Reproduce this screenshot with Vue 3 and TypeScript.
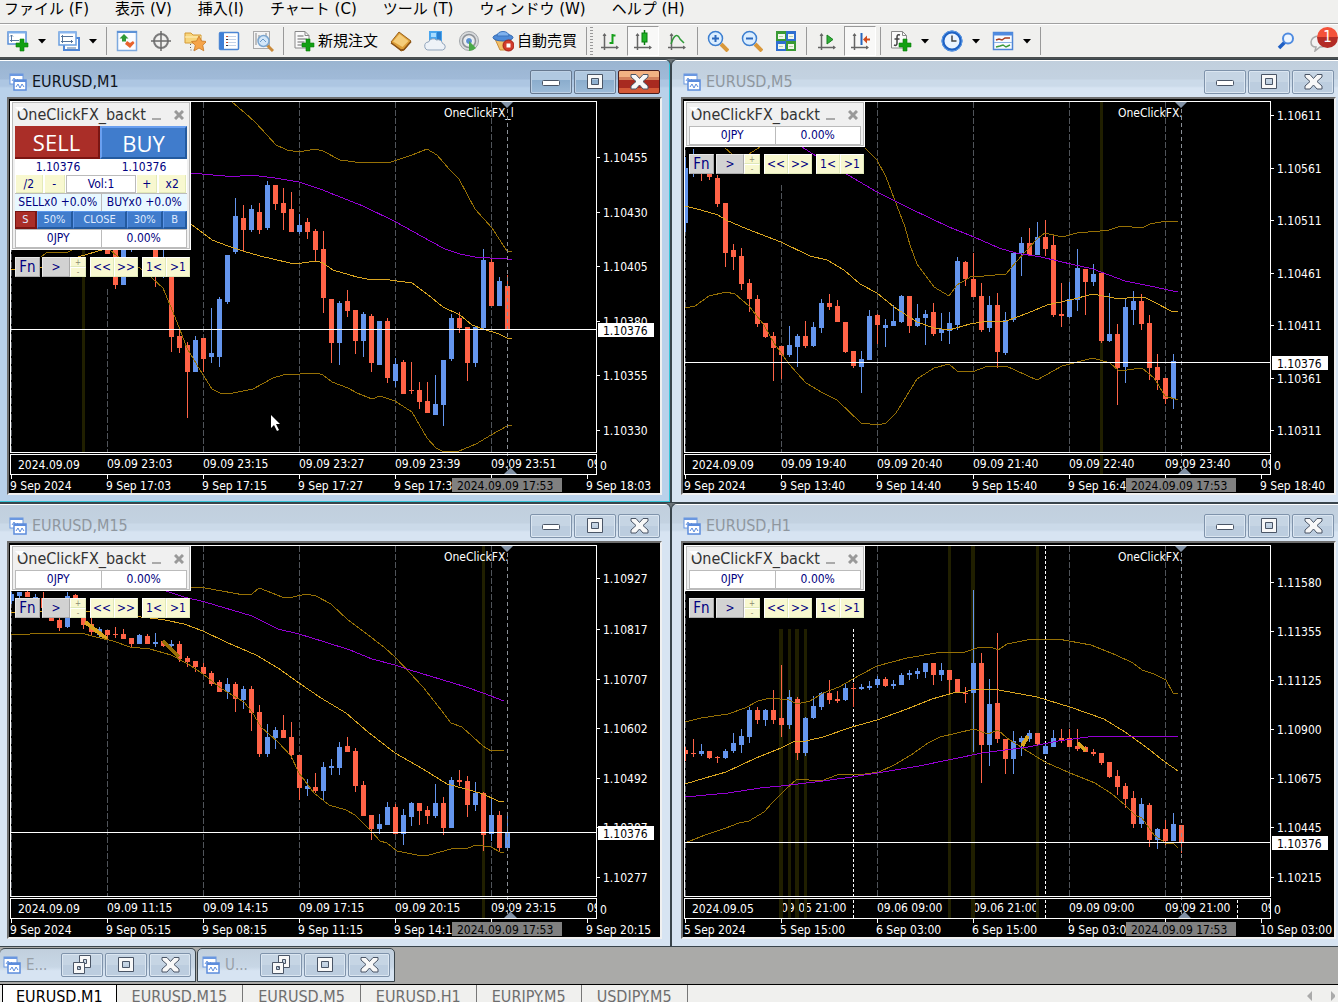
<script setup lang="ts">
type Bar = [high: number, open: number, close: number, low: number, up: 0 | 1]

interface Chart {
  title: string
  active: boolean
  full: boolean
  label: string
  firstBar: number
  gridTop: number
  bars: Bar[]
  bands: string[]
  mid: string
  slow: string
  marks: { d: string; color: string }[]
  stripes: { x: number; w: number; y: number; sub: boolean }[]
  days: { x: number; y: number }[]
  price: number
  scale: { y: number; text: string }[]
  subDate: string
  subTimes: string[]
  times: string[]
}

const BLUE = '#6495ed'
const RED = '#ff6347'
const columns = [11, 107, 203, 299, 395, 491]

const levels = (ys: number[], texts: string[]) => ys.map((y, i) => ({ y, text: texts[i] }))

const charts: Chart[] = [
  {
    title: 'EURUSD,M1',
    active: true,
    full: true,
    label: 'OneClickFX_l',
    firstBar: 12,
    gridTop: 289,
    bars: [
      [248, 248, 254, 254, 0], [240, 240, 285, 289, 0], [240, 240, 285, 285, 1], [240, 240, 245, 252, 1],
      [240, 240, 241, 241, 0], [240, 240, 241, 241, 0], [240, 240, 275, 287, 0], [248, 262, 274, 278, 1],
      [262, 265, 337, 352, 0], [329, 336, 348, 353, 0], [342, 345, 372, 418, 0], [336, 340, 372, 372, 1],
      [338, 338, 359, 372, 0], [308, 353, 357, 363, 1], [297, 299, 357, 367, 1], [255, 255, 302, 304, 1],
      [198, 216, 252, 254, 1], [205, 218, 230, 251, 0], [205, 209, 230, 232, 1], [203, 212, 230, 234, 0],
      [181, 185, 228, 230, 1], [185, 185, 204, 210, 0], [188, 203, 213, 230, 0], [192, 209, 232, 232, 0],
      [214, 225, 232, 234, 1], [218, 222, 232, 239, 0], [229, 231, 250, 261, 0], [231, 249, 298, 313, 0],
      [299, 299, 343, 363, 0], [301, 303, 343, 365, 1], [290, 301, 311, 317, 0], [310, 310, 341, 354, 0],
      [312, 314, 341, 357, 1], [314, 316, 363, 372, 0], [321, 321, 365, 365, 1], [318, 321, 378, 383, 0],
      [358, 364, 381, 387, 1], [360, 362, 394, 394, 0], [362, 390, 391, 394, 0], [382, 390, 402, 409, 0],
      [382, 401, 413, 413, 0], [375, 404, 415, 415, 1], [360, 360, 405, 426, 1], [314, 318, 359, 361, 1],
      [312, 318, 328, 333, 0], [327, 327, 363, 381, 0], [327, 327, 363, 367, 1], [249, 260, 328, 329, 1],
      [258, 262, 306, 306, 0], [277, 281, 306, 306, 1], [275, 286, 329, 329, 0],
    ],
    bands: [
      '232,102 245,113 255,122 267,135 276,145 287,150 299,152 315,149 323,151 340,160 355,162 363,163 372,162 388,163 397,160 412,155 427,149 437,155 450,170 459,179 475,209 492,228 507,251 512,251',
      '41,257 46,253 60,252 66,253 72,250',
      '110,250 117,256 140,268 152,278 163,288 175,317 187,348 200,370 212,389 220,393 228,394 243,391 253,389 273,378 283,375 317,373 323,375 332,382 348,388 357,393 372,399 380,396 395,401 412,412 427,438 436,448 442,451 459,451 476,444 491,435 507,426 512,425',
    ],
    mid: '11,269 14,270 40,268 191,224 212,240 228,246 243,251 260,256 290,263 302,263 317,261 323,263 333,270 357,277 372,280 383,279 397,281 412,283 427,294 443,307 460,315 472,325 483,329 499,334 507,338 512,338',
    slow: '190,173 225,176 240,176 251,175 275,178 299,182 323,190 330,193 363,206 396,222 430,241 445,249 460,254 475,257 490,258 502,258 512,260',
    marks: [],
    stripes: [{ x: 82, w: 3, y: 249, sub: false }],
    days: [],
    price: 329,
    scale: levels([157, 212, 266, 321, 375, 430], ['1.10455', '1.10430', '1.10405', '1.10380', '1.10355', '1.10330']),
    subDate: '2024.09.09',
    subTimes: ['09.09 23:03', '09.09 23:15', '09.09 23:27', '09.09 23:39', '09.09 23:51'],
    times: ['9 Sep 2024', '9 Sep 17:03', '9 Sep 17:15', '9 Sep 17:27', '9 Sep 17:39', '', '9 Sep 18:03'],
  },
  {
    title: 'EURUSD,M5',
    active: false,
    full: false,
    label: 'OneClickFX.',
    firstBar: 0,
    gridTop: 185,
    bars: [
      [157, 168, 223, 232, 1], [149, 155, 170, 177, 1], [155, 160, 174, 181, 0], [160, 165, 177, 180, 0],
      [175, 178, 204, 207, 0], [203, 203, 253, 267, 0], [244, 250, 257, 270, 0], [248, 256, 284, 290, 0],
      [279, 283, 299, 312, 0], [295, 299, 324, 327, 0], [323, 323, 337, 338, 0], [332, 336, 348, 381, 0],
      [346, 346, 355, 379, 0], [326, 345, 355, 357, 1], [334, 336, 347, 367, 1], [321, 336, 346, 348, 0],
      [322, 327, 346, 347, 1], [299, 303, 328, 333, 1], [294, 303, 307, 310, 0], [300, 306, 322, 322, 0],
      [322, 322, 352, 353, 0], [351, 351, 366, 368, 0], [351, 359, 367, 393, 1], [310, 316, 360, 360, 1],
      [314, 315, 325, 344, 0], [319, 325, 328, 347, 1], [305, 321, 326, 326, 1], [295, 296, 322, 323, 1],
      [296, 296, 326, 333, 0], [304, 318, 326, 327, 1], [310, 314, 318, 345, 1], [303, 312, 334, 336, 0],
      [313, 329, 333, 341, 1], [312, 323, 331, 344, 1], [257, 261, 325, 330, 1], [261, 262, 279, 286, 0],
      [253, 279, 297, 297, 0], [283, 296, 330, 332, 0], [296, 305, 328, 332, 1], [293, 305, 352, 368, 0],
      [312, 320, 353, 355, 1], [252, 253, 320, 322, 1], [237, 243, 253, 276, 1], [228, 243, 255, 256, 0],
      [222, 237, 255, 255, 1], [220, 237, 249, 256, 0], [236, 245, 315, 317, 0], [283, 314, 316, 327, 0],
      [282, 299, 317, 318, 1], [249, 268, 300, 311, 1], [269, 269, 282, 315, 0], [264, 274, 282, 286, 1],
      [273, 273, 341, 343, 0], [293, 334, 341, 342, 1], [324, 334, 368, 405, 0], [299, 307, 367, 383, 1],
      [291, 301, 310, 325, 1], [294, 301, 324, 330, 0], [315, 323, 368, 380, 0], [354, 367, 380, 390, 0],
      [378, 378, 399, 404, 0], [354, 361, 399, 409, 1],
    ],
    bands: [
      '51,148 58,154 75,154 86,147',
      '191,148 203,160 212,177 220,198 231,227 236,245 243,264 260,287 275,296 283,285 298,276 310,276 332,274 342,262 363,239 371,233 388,237 403,233 426,231 435,230 447,226 468,228 476,224 492,221 504,222',
      '11,308 21,306 35,296 52,292 61,294 75,306 90,325 100,343 115,364 132,383 149,393 163,400 187,423 204,425 212,423 222,413 243,379 260,368 275,364 283,371 298,372 314,366 332,366 363,380 388,366 419,358 436,363 445,371 468,368 480,378 491,396 504,400',
    ],
    mid: '11,206 27,210 44,215 52,220 73,229 107,242 136,256 153,260 170,270 186,284 203,293 220,307 243,322 260,328 275,330 296,324 314,321 332,321 354,313 373,305 396,300 419,294 445,299 461,297 470,297 482,303 497,311 504,312',
    slow: '128,147 142,156 174,175 203,192 237,209 275,227 300,237 325,248 342,253 367,257 388,262 419,269 451,281 476,286 499,291 504,291',
    marks: [],
    stripes: [{ x: 426, w: 3, y: 102, sub: true }],
    days: [],
    price: 362,
    scale: levels([115, 168, 220, 273, 325, 378, 430], ['1.10611', '1.10561', '1.10511', '1.10461', '1.10411', '1.10361', '1.10311']),
    subDate: '2024.09.09',
    subTimes: ['09.09 19:40', '09.09 20:40', '09.09 21:40', '09.09 22:40', '09.09 23:40'],
    times: ['9 Sep 2024', '9 Sep 13:40', '9 Sep 14:40', '9 Sep 15:40', '9 Sep 16:40', '', '9 Sep 18:40'],
  },
  {
    title: 'EURUSD,M15',
    active: false,
    full: false,
    label: 'OneClickFX.',
    firstBar: 0,
    gridTop: 185,
    bars: [
      [148, 150, 157, 160, 1], [148, 148, 152, 154, 1], [147, 148, 153, 153, 0], [150, 153, 156, 160, 1],
      [148, 154, 164, 166, 0], [165, 170, 177, 177, 0], [170, 176, 184, 187, 0], [148, 152, 183, 184, 1],
      [150, 151, 154, 160, 0], [165, 172, 181, 185, 0], [174, 180, 188, 192, 0], [183, 185, 191, 194, 1],
      [186, 186, 191, 196, 0], [183, 190, 191, 194, 0], [185, 190, 195, 195, 0], [194, 194, 200, 203, 0],
      [190, 191, 200, 200, 1], [190, 192, 200, 200, 0], [189, 198, 200, 203, 1], [196, 197, 202, 203, 0],
      [196, 200, 202, 205, 1], [197, 200, 215, 218, 0], [212, 214, 218, 223, 0], [217, 217, 223, 228, 0],
      [219, 223, 230, 230, 0], [227, 229, 240, 242, 0], [236, 238, 248, 248, 0], [234, 240, 248, 255, 1],
      [238, 240, 255, 268, 0], [242, 245, 256, 265, 1], [242, 245, 269, 287, 0], [261, 268, 310, 313, 0],
      [280, 293, 310, 313, 1], [283, 286, 294, 305, 1], [271, 286, 294, 294, 0], [278, 293, 311, 315, 0],
      [311, 311, 344, 356, 0], [335, 342, 345, 352, 1], [329, 343, 347, 349, 0], [318, 323, 347, 356, 1],
      [315, 322, 324, 331, 1], [298, 303, 324, 331, 1], [293, 302, 308, 308, 0], [304, 307, 342, 348, 0],
      [337, 341, 372, 372, 0], [371, 371, 385, 396, 0], [370, 380, 385, 390, 1], [358, 363, 381, 381, 1],
      [360, 363, 390, 390, 0], [365, 371, 390, 401, 1], [358, 359, 373, 382, 1], [359, 359, 367, 381, 0],
      [362, 366, 372, 380, 0], [340, 359, 372, 374, 1], [353, 359, 384, 391, 0], [333, 336, 384, 384, 1],
      [326, 336, 338, 342, 0], [332, 337, 361, 373, 0], [338, 349, 361, 367, 1], [348, 349, 391, 407, 0],
      [355, 371, 390, 397, 1], [367, 371, 404, 407, 0], [371, 388, 404, 404, 1],
    ],
    bands: [
      '191,143 205,144 222,147 244,151 252,150 259,144 267,147 282,153 293,153 306,150 316,152 331,160 348,176 363,187 385,204 395,213 410,229 423,243 438,262 451,279 462,283 483,302 491,307 504,306',
      '11,191 30,190 43,189 81,189 96,193 113,197 130,203 150,205 171,211 188,220 203,230 222,245 244,258 252,268 261,283 278,298 291,312 299,329 314,349 329,361 346,366 355,371 372,388 380,397 387,399 397,407 417,411 429,411 451,405 468,404 476,401 491,403 500,408 504,409',
    ],
    mid: '11,168 20,168 85,167 150,174 165,176 184,180 203,187 226,198 256,211 278,224 299,239 321,254 346,269 368,288 395,309 423,325 447,340 466,345 483,350 498,357 504,358',
    slow: '166,147 184,153 205,158 252,172 278,185 299,190 325,198 350,206 372,215 395,221 410,226 453,239 466,243 483,249 504,257',
    marks: [
      { d: 'M85 178L107 195', color: '#daa520' },
      { d: 'M163 197L179 213', color: '#967005' },
    ],
    stripes: [{ x: 482, w: 3, y: 102, sub: true }],
    days: [],
    price: 388,
    scale: levels([134, 185, 235, 284, 334, 383, 433], ['1.10927', '1.10817', '1.10707', '1.10602', '1.10492', '1.10387', '1.10277']),
    subDate: '2024.09.09',
    subTimes: ['09.09 11:15', '09.09 14:15', '09.09 17:15', '09.09 20:15', '09.09 23:15'],
    times: ['9 Sep 2024', '9 Sep 05:15', '9 Sep 08:15', '9 Sep 11:15', '9 Sep 14:15', '', '9 Sep 20:15'],
  },
  {
    title: 'EURUSD,H1',
    active: false,
    full: false,
    label: 'OneClickFX.',
    firstBar: 0,
    gridTop: 185,
    bars: [
      [303, 306, 310, 317, 0], [295, 309, 310, 313, 0], [300, 307, 310, 312, 1], [307, 307, 314, 315, 0],
      [312, 313, 314, 319, 0], [305, 307, 314, 315, 1], [289, 299, 307, 309, 1], [285, 292, 301, 309, 1],
      [263, 266, 293, 299, 1], [263, 266, 276, 280, 0], [265, 266, 276, 282, 1], [246, 266, 276, 280, 0],
      [221, 274, 281, 293, 0], [246, 253, 281, 285, 1], [253, 255, 309, 316, 0], [273, 274, 309, 312, 1],
      [252, 262, 274, 275, 1], [248, 249, 263, 266, 1], [236, 249, 256, 260, 0], [247, 255, 257, 259, 0],
      [240, 244, 256, 257, 1], [239, 244, 245, 263, 0], [240, 243, 245, 246, 1], [237, 242, 244, 246, 1],
      [232, 235, 241, 244, 1], [233, 235, 242, 243, 0], [236, 240, 242, 245, 1], [229, 231, 241, 241, 1],
      [226, 229, 231, 236, 1], [224, 227, 230, 235, 1], [219, 219, 228, 234, 1], [219, 219, 231, 241, 0],
      [219, 226, 231, 237, 1], [226, 226, 236, 249, 0], [235, 235, 249, 249, 0], [243, 249, 250, 259, 0],
      [146, 219, 249, 308, 1], [209, 219, 301, 339, 0], [235, 260, 301, 322, 1], [189, 259, 295, 299, 0],
      [295, 295, 315, 330, 0], [287, 297, 315, 330, 1], [292, 294, 298, 312, 1], [286, 289, 295, 298, 1],
      [289, 289, 300, 301, 0], [299, 302, 310, 310, 1], [286, 294, 303, 303, 1], [285, 294, 296, 299, 0],
      [285, 294, 303, 303, 0], [285, 302, 305, 307, 0], [302, 303, 308, 308, 0], [305, 308, 310, 312, 0],
      [309, 309, 319, 321, 0], [318, 318, 333, 334, 0], [326, 332, 343, 351, 0], [339, 342, 355, 364, 0],
      [347, 354, 380, 384, 0], [354, 360, 380, 384, 1], [359, 361, 396, 403, 0], [384, 385, 396, 405, 1],
      [376, 385, 397, 401, 0], [369, 380, 397, 397, 1], [381, 381, 398, 409, 0],
    ],
    bands: [
      '11,278 27,274 54,270 71,264 84,257 96,254 115,256 123,260 136,257 149,249 165,243 186,231 203,222 233,214 262,209 291,208 306,203 317,203 324,206 333,200 358,195 384,195 417,201 442,211 459,219 468,226 480,230 492,236 499,249 504,249',
      '11,399 31,391 52,384 65,379 75,377 90,368 98,359 111,346 123,335 147,337 163,331 191,330 205,328 220,321 237,311 254,299 266,293 283,289 300,285 314,290 324,286 333,294 350,305 371,318 396,329 421,339 438,350 451,361 461,371 468,374 480,391 493,400 499,399 504,404',
    ],
    mid: '11,340 31,334 52,328 82,314 107,304 119,298 132,297 149,293 178,283 203,276 233,265 258,255 279,249 291,248 300,245 325,246 363,253 396,263 430,275 451,288 472,303 491,318 504,327',
    slow: '11,353 54,349 86,344 107,342 149,337 178,333 203,329 245,322 279,315 308,309 354,303 384,297 421,292 472,292 489,293 504,292',
    marks: [
      { d: 'M348 302L354 292', color: '#daa520' },
      { d: 'M404 299L412 307', color: '#daa520' },
    ],
    stripes: [
      { x: 105, w: 4, y: 185, sub: true },
      { x: 114, w: 3, y: 185, sub: true },
      { x: 121, w: 4, y: 185, sub: true },
      { x: 130, w: 3, y: 185, sub: true },
      { x: 274, w: 3, y: 102, sub: true },
      { x: 297, w: 4, y: 102, sub: true },
      { x: 362, w: 3, y: 102, sub: true },
    ],
    days: [
      { x: 179, y: 185 },
      { x: 371, y: 102 },
      { x: 563, y: 455 },
    ],
    price: 398,
    scale: levels([138, 187, 236, 285, 334, 383, 433], ['1.11580', '1.11355', '1.11125', '1.10900', '1.10675', '1.10445', '1.10215']),
    subDate: '2024.09.05',
    subTimes: ['09.05 21:00', '09.06 09:00', '09.06 21:00', '09.09 09:00', '09.09 21:00'],
    times: ['5 Sep 2024', '5 Sep 15:00', '6 Sep 03:00', '6 Sep 15:00', '9 Sep 03:00', '', '10 Sep 03:00'],
  },
]

const barX = (chart: Chart, i: number) => 11 + 8 * (chart.firstBar + i)

const menus = ['ファイル (F)', '表示 (V)', '挿入(I)', 'チャート (C)', 'ツール (T)', 'ウィンドウ (W)', 'ヘルプ (H)']
const tabs = ['EURUSD.M1', 'EURUSD.M15', 'EURUSD.M5', 'EURUSD.H1', 'EURJPY.M5', 'USDJPY.M5']

const plus = '<path d="M13 9h4v4h4v4h-4v4h-4v-4h-4v-4h4z" fill="#12a012" stroke="#0a7c0a" stroke-width=".6"/>'
const axes = '<path d="M5.500 4v16M2 17.500h17" stroke="#666" stroke-width="1.500" fill="none"/><path d="M3.500 6l2-3 2 3zM17 15.500l3 2-3 2z" fill="#666"/>'

const icons: Record<string, string> = {
  newChart:
    '<rect x="1" y="2" width="18" height="12" fill="#fff" stroke="#5a8fd8" stroke-width="1.500"/><path d="M1 2.500h18" stroke="#7fb0ea" stroke-width="2"/><path d="M4.500 5v7M3 10.500h9M3 6.500l1.500-1.500 1.500 1.500" stroke="#5577a0" fill="none"/>' + plus,
  profiles:
    '<rect x="6" y="8" width="15" height="12" fill="#fff" stroke="#4f86d6" stroke-width="2"/><rect x="1" y="2" width="17" height="13" fill="#fff" stroke="#6a9ee0" stroke-width="1.500"/><path d="M1 2.500h17" stroke="#8ab6ee" stroke-width="2"/><path d="M3 6.500h12M3 11.500h12M4.500 5v8M13.500 10v3M9 18h9" stroke="#55749c" fill="none"/>',
  watch:
    '<rect x="1.500" y="1.500" width="19" height="19" fill="#fafcff" stroke="#7da9de" stroke-width="1.500"/><path d="M1 2h20" stroke="#5d92d6" stroke-width="2"/><path d="M8 4l4.500 4.500h-2.500v3h-4v-3H3.500z" fill="#2f9a35"/><path d="M11 11l3 2 3-2 1.500 2-4.500 5-5-4z" fill="#e8632c"/>',
  cross:
    '<circle cx="11" cy="11" r="7" fill="none" stroke="#7a7a7a" stroke-width="2"/><path d="M11 1v20M1 11h20" stroke="#6b6b6b" stroke-width="1.500"/>',
  navigator:
    '<path d="M1 3h6l2 2h8v8H1z" fill="#f7d57c" stroke="#d59a35"/><path d="M1 7h16" stroke="#fff2c0"/><path d="M6.500 14v6h6" stroke="#666" stroke-dasharray="1 2" fill="none"/><path d="M15 6l2.500 5 5 .5-3.700 3.800 1 5.500-4.800-2.800-4.800 2.800 1-5.500L7.500 11.500l5-.5z" fill="#f5a44a" stroke="#c77722" stroke-width=".8"/>',
  terminal:
    '<rect x="1.500" y="2.500" width="19" height="17" rx="1" fill="#fff" stroke="#4c86d4" stroke-width="1.500"/><rect x="2" y="3" width="4" height="16" fill="#3f7fd6"/><path d="M8 6.500h10M8 9.500h10M8 12.500h10M8 15.500h10" stroke="#c3d2e8"/><path d="M8 6.500h2M8 12.500h2" stroke="#d05030"/><path d="M8 9.500h2M8 15.500h2" stroke="#334"/>',
  tester:
    '<rect x="1.500" y="1.500" width="16" height="17" fill="#f4f4f4" stroke="#aaa"/><path d="M4 3v12M7 5v7M14 3v5" stroke="#888"/><path d="M15 15l6 6" stroke="#c98a3a" stroke-width="3"/><circle cx="11.500" cy="11" r="5.500" fill="#cfe5fa" fill-opacity=".9" stroke="#7ba6cf" stroke-width="1.500"/><path d="M8 12l3-3 3 3" stroke="#6b9ac8" fill="none"/>',
  order:
    '<path d="M2 1.500h10l4 4V18H2z" fill="#fafafa" stroke="#888"/><path d="M12 1.500v4h4" fill="none" stroke="#888"/><path d="M4.500 6h6M4.500 9h9M4.500 12h7M4.500 15h5" stroke="#666"/>' + plus,
  book:
    '<path d="M1 12L9 2l12 9-7 9-3 1z" fill="#dd9f38" stroke="#9a621c"/><path d="M3 11.500L9.500 4l9 7-6 6z" fill="#f5cd7a"/><path d="M1 13l10 7 3-.5 7-8" fill="none" stroke="#8a5215" stroke-width="1.500"/>',
  cloud:
    '<path d="M5 1h13v11H5z" fill="#4aa6ee"/><path d="M7 3h5v4H7z" fill="#a8dcff"/><path d="M13 2h4v9h-4z" fill="#2a7fd0"/><path d="M5 20a4 4 0 0 1-.5-8 5 5 0 0 1 8-2 4.500 4.500 0 0 1 6 3.500 3.300 3.300 0 0 1 0 6.500z" fill="#eef2f7" stroke="#8fa3ba"/>',
  signal:
    '<circle cx="11" cy="11" r="9.500" fill="#d8dadc" stroke="#a2a6aa"/><circle cx="11" cy="11" r="6.500" fill="#e9eaec" stroke="#8d9297" stroke-width="1.500"/><circle cx="11" cy="11" r="3.500" fill="#5b8fce" stroke="#fff"/><path d="M11 11v10a10 10 0 0 0 7-3z" fill="#4aaa48"/>',
  robot:
    '<path d="M3 9h16l-3 11H8z" fill="#f2bf68" stroke="#c98c38"/><ellipse cx="11" cy="7.500" rx="10" ry="3.500" fill="#4d8bd8" stroke="#2f66b0"/><path d="M5 6c0-6 12-6 12 0z" fill="#7fb2ee" stroke="#3d75bd"/><circle cx="16.500" cy="15.500" r="5.500" fill="#d23b2c" stroke="#a11f16"/><rect x="14.500" y="13.500" width="4" height="4" fill="#fff"/>',
  bars: axes + '<path d="M13.500 4v10M13.500 5.500h3M10.500 13h3" stroke="#17a01c" stroke-width="2" fill="none"/>',
  candles: axes + '<path d="M12.500 0v15" stroke="#0a7a10" stroke-width="1.500"/><rect x="10" y="3" width="5" height="9" fill="#1fb325" stroke="#0a7a10"/>',
  line: axes + '<path d="M5 14c3-9 6-11 9-5l4 4" stroke="#2f9a38" stroke-width="1.500" fill="none"/>',
  zoomIn:
    '<path d="M14 14l7 7" stroke="#d9983a" stroke-width="4"/><circle cx="8.500" cy="8.500" r="7" fill="#dbeeff" stroke="#3d7fd0" stroke-width="1.500"/><path d="M8.500 5v7M5 8.500h7" stroke="#2c69bd" stroke-width="2"/>',
  zoomOut:
    '<path d="M14 14l7 7" stroke="#d9983a" stroke-width="4"/><circle cx="8.500" cy="8.500" r="7" fill="#dbeeff" stroke="#3d7fd0" stroke-width="1.500"/><path d="M5 8.500h7" stroke="#2c69bd" stroke-width="2"/>',
  tile:
    '<path d="M1 1h10v10H1zM11 11h10v10H11z" fill="#3a9a35"/><path d="M11 1h10v10H11zM1 11h10v10H1z" fill="#2f6fd0"/><path d="M3 4h7v5H3zM13 4h6v5h-6zM3 14h7v5H3zM13 14h6v5h-6z" fill="#f3f8ee"/><path d="M4 6.500h4M14 6.500h4M4 16.500h4M14 16.500h4" stroke="#b9d3a8"/>',
  scroll: axes + '<path d="M11 5l6 4.500-6 4.500z" fill="#33b03a" stroke="#16801c"/>',
  shift: axes + '<path d="M12.500 3v12" stroke="#2767bd" stroke-width="2"/><path d="M14 9.500l4-4v3h3v2h-3v3z" fill="#d14b1e"/>',
  indicator:
    '<path d="M1.500 1.500h11l4 4V18h-15z" fill="#fafafa" stroke="#8a8a8a"/><path d="M12.500 1.500v4h4" fill="none" stroke="#8a8a8a"/><path d="M10 5c-3-1-3 1-3 3v5c0 2-1 3-3 2M4.500 9h5" stroke="#444" stroke-width="1.500" fill="none"/>' + plus,
  clock:
    '<circle cx="11" cy="11" r="9" fill="#eaf4ff" stroke="#1f62c4" stroke-width="3"/><circle cx="11" cy="11" r="10" fill="none" stroke="#5b9be8"/><path d="M11 5.500V11h4.500" stroke="#444" stroke-width="1.500" fill="none"/>',
  template:
    '<rect x="1.500" y="2.500" width="19" height="17" fill="#f8fbff" stroke="#4f86d6" stroke-width="1.500"/><path d="M1 4h20" stroke="#4f8be0" stroke-width="3"/><path d="M2 12.500h18" stroke="#8db3e6"/><path d="M4 10l3-1 3 1 3-2h5" stroke="#a63c20" stroke-width="1.500" fill="none"/><path d="M4 17l4-1 3-1 3 2 4-2" stroke="#3d9a3a" stroke-width="1.500" fill="none"/>',
}

interface Tool {
  icon?: string
  name?: string
  text?: string
  drop?: boolean
  pressed?: boolean
  sep?: boolean
  grip?: boolean
}
const tools: Tool[] = [
  { icon: 'newChart', name: 'New chart', drop: true },
  { icon: 'profiles', name: 'Profiles', drop: true },
  { sep: true },
  { icon: 'watch', name: 'Market watch' },
  { icon: 'cross', name: 'Crosshair' },
  { icon: 'navigator', name: 'Navigator' },
  { icon: 'terminal', name: 'Terminal' },
  { icon: 'tester', name: 'Strategy tester' },
  { sep: true },
  { icon: 'order', text: '新規注文' },
  { icon: 'book', name: 'Meta editor' },
  { icon: 'cloud', name: 'Hosting' },
  { icon: 'signal', name: 'Signals' },
  { icon: 'robot', text: '自動売買' },
  { sep: true },
  { grip: true },
  { icon: 'bars', name: 'Bar chart' },
  { icon: 'candles', name: 'Candlesticks', pressed: true },
  { icon: 'line', name: 'Line chart' },
  { sep: true },
  { icon: 'zoomIn', name: 'Zoom in' },
  { icon: 'zoomOut', name: 'Zoom out' },
  { icon: 'tile', name: 'Tile windows' },
  { sep: true },
  { icon: 'scroll', name: 'Auto scroll' },
  { icon: 'shift', name: 'Chart shift', pressed: true },
  { sep: true },
  { icon: 'indicator', name: 'Indicators', drop: true },
  { icon: 'clock', name: 'Periods', drop: true },
  { icon: 'template', name: 'Templates', drop: true },
  { sep: true },
]

const winGlyph: Record<string, string> = {
  min: '<rect x="2.500" y="9.500" width="17" height="5" rx="1" fill="#fff" stroke="#4a5566"/>',
  max: '<path d="M3.500 3.500h15v14h-15zM7.500 7.500v6h7v-6z" fill="#f8f8f8" stroke="#4a5566" fill-rule="evenodd"/>',
  close: '<path d="M3 3.500h5l3.500 4 3.500-4h5v2.500l-5 4.500 5 4.500v3h-5l-3.500-4-3.500 4H3v-3l5-4.500L3 6z" fill="#f8f8f8" stroke="#4a5566" stroke-linejoin="round"/>',
  restore:
    '<path d="M8.500 1.500h11v12h-11zM12.500 5.500v4h3v-4z" fill="#f8f8f8" stroke="#4a5566" fill-rule="evenodd"/><path d="M2.500 8.500h11v11h-11zM6.500 12.500v3h3v-3z" fill="#f8f8f8" stroke="#4a5566" fill-rule="evenodd"/>',
}
const chartGlyph =
  '<rect x="1" y="1" width="13" height="10" fill="#fff" stroke="#6a97e0" stroke-width="1"/><path d="M1 2h13" stroke="#6a97e0" stroke-width="2"/><path d="M3 8l2-3 2 3 2-2" stroke="#6a97e0" fill="none"/><rect x="5" y="7" width="12" height="10" fill="#fff" stroke="#5c8cdc" stroke-width="1.500"/><path d="M5 8h12" stroke="#5c8cdc" stroke-width="2"/><path d="M7 14l2-3 2 4 2-4 2 3" stroke="#5c8cdc" fill="none"/>'
</script>

<template>
  <div class="app">
    <nav class="menu">
      <button v-for="m in menus" :key="m" class="menu-item">{{ m }}</button>
    </nav>

    <div class="toolbar">
      <template v-for="(t, i) in tools" :key="i">
        <span v-if="t.sep" class="sep"></span>
        <span v-else-if="t.grip" class="grip"></span>
        <template v-else>
          <button class="tool" :class="{ pressed: t.pressed, wide: t.text }" :aria-label="t.name">
            <svg width="22" height="22" viewBox="0 0 22 22" v-html="icons[t.icon!]"></svg>
            <span v-if="t.text">{{ t.text }}</span>
          </button>
          <button v-if="t.drop" class="drop" :aria-label="t.name + ' list'">
            <svg width="8" height="5" viewBox="0 0 8 5"><path d="M0 0h8L4 4.500z" fill="#000" /></svg>
          </button>
        </template>
      </template>
      <div class="tool-end">
        <button class="find" aria-label="Search">
          <svg width="18" height="18" viewBox="0 0 18 18">
            <path d="M2 16l6-6" stroke="#1f5fc4" stroke-width="3.500" />
            <circle cx="11" cy="6.500" r="5" fill="#eef6ff" stroke="#4f8be0" stroke-width="2" />
          </svg>
        </button>
        <button class="chat" aria-label="Messages">
          <svg width="20" height="18" viewBox="0 0 20 18">
            <path d="M9 2c-5 0-8 3-8 6s2 5 5 5l-1 4 5-4c4 0 7-2 7-5" fill="#f2f2f2" stroke="#aaa" stroke-width="1.500" />
          </svg>
          <span class="badge">1</span>
        </button>
      </div>
    </div>

    <main class="desktop">
      <section v-for="chart in charts" :key="chart.title" class="window" :class="{ active: chart.active }">
        <header class="titlebar">
          <svg class="win-icon" width="18" height="18" viewBox="0 0 18 18" v-html="chartGlyph"></svg>
          <h2>{{ chart.title }}</h2>
          <button class="wbtn" aria-label="Minimize"><svg width="22" height="22" viewBox="0 0 22 22" v-html="winGlyph.min"></svg></button>
          <button class="wbtn" aria-label="Maximize"><svg width="22" height="22" viewBox="0 0 22 22" v-html="winGlyph.max"></svg></button>
          <button class="wbtn shut" aria-label="Close"><svg width="22" height="22" viewBox="0 0 22 22" v-html="winGlyph.close"></svg></button>
        </header>

        <div class="client">
          <svg class="plot" width="100%" height="394">
            <defs>
              <clipPath :id="'clip-' + chart.title"><rect x="11" y="102" width="585" height="350" /></clipPath>
              <clipPath :id="'sub-' + chart.title"><rect x="11" y="455" width="585" height="19" /></clipPath>
            </defs>
            <g transform="translate(-9 -99)">
              <g :clip-path="`url(#clip-${chart.title})`" shape-rendering="crispEdges">
                <line
                  v-for="x in columns" :key="x" class="grid"
                  :x1="x + 0.5" :x2="x + 0.5" :y1="x === 107 ? chart.gridTop : 102" y2="452"
                />
                <rect v-for="s in chart.stripes" :key="s.x" :x="s.x" :y="s.y" :width="s.w" height="352" fill="#201f00" />
                <line v-for="d in chart.days" :key="d.x" class="day" :x1="d.x + 0.5" :x2="d.x + 0.5" :y1="d.y" y2="460" />
                <g v-for="(b, i) in chart.bars" :key="i" :fill="b[4] ? BLUE : RED">
                  <rect :x="barX(chart, i)" :y="b[0]" width="1" :height="b[3] - b[0]" />
                  <rect :x="barX(chart, i) - 2" :y="b[1]" width="5" :height="b[2] - b[1]" />
                </g>
                <path v-for="m in chart.marks" :key="m.d" :d="m.d" :stroke="m.color" stroke-width="4" />
                <polyline v-for="b in chart.bands" :key="b" :points="b" class="curve" stroke="#967005" />
                <polyline :points="chart.mid" class="curve" stroke="#daa520" />
                <polyline :points="chart.slow" class="curve" stroke="#9400d3" />
              </g>
              <text class="t" x="444" y="117">{{ chart.label }}</text>
              <line class="now" x1="507.500" x2="507.500" y1="102" y2="474" />
              <rect x="10" :y="chart.price" width="587" height="1" fill="#fff" />
              <rect class="frame" x="10.500" y="101.500" width="586" height="351" />

              <g>
                <text class="t" x="18" y="469">{{ chart.subDate }}</text>
                <text v-for="(s, i) in chart.subTimes" :key="s" class="t" :x="107 + 96 * i" y="468">{{ s }}</text>
                <text class="t" x="587" y="468" :clip-path="`url(#sub-${chart.title})`">09</text>
                <text class="t" x="600" y="470">0</text>
                <g shape-rendering="crispEdges">
                  <template v-for="s in chart.stripes" :key="s.x">
                    <rect v-if="s.sub" :x="s.x" y="455" :width="s.w" height="19" fill="#201f00" />
                  </template>
                  <line v-for="d in chart.days" :key="d.x" class="day" :x1="d.x + 0.5" :x2="d.x + 0.5" y1="456" y2="474" />
                </g>
              </g>
              <rect class="frame" x="10.500" y="454.500" width="586" height="20" />
              <path d="M501 102h12l-6 6zM504 474l6.500-6.500 6.500 6.500z" fill="#8191a5" />

              <template v-for="(s, i) in chart.times" :key="i">
                <rect :x="11 + 96 * i" y="475" width="1" height="4" fill="#fff" />
                <text class="t" :x="10 + 96 * i" y="490">{{ s }}</text>
              </template>
              <rect x="452" y="478" width="110" height="14" fill="#808080" />
              <text class="t" x="457" y="490" fill="#000">2024.09.09 17:53</text>

              <g v-for="l in chart.scale" :key="l.text">
                <rect x="597" :y="l.y" width="3" height="1" fill="#fff" />
                <text class="t" x="603" :y="l.y + 5">{{ l.text }}</text>
              </g>
              <rect x="598" :y="chart.price - 6" width="56" height="14" fill="#fff" />
              <text class="t" x="603" :y="chart.price + 6" fill="#000">1.10376</text>
              <path v-if="chart.active" d="M271 415v13l3-3 3 6 2-1-3-6h4z" fill="#fff" />
            </g>
          </svg>

          <div class="overlay">
            <div class="panel">
              <div class="panel-head">
                <span>OneClickFX_backt</span>
                <button class="dash" aria-label="Collapse panel"></button>
                <button class="px" aria-label="Close panel">
                  <svg width="10" height="10" viewBox="0 0 10 10"><path d="M1 1l8 8M9 1L1 9" stroke="#999" stroke-width="3" /></svg>
                </button>
              </div>
              <template v-if="chart.full">
                <div class="row big">
                  <button class="sell">SELL</button>
                  <button class="buy">BUY</button>
                </div>
                <div class="row quote"><span>1.10376</span><span>1.10376</span></div>
                <div class="row vol">
                  <button>/2</button>
                  <button>-</button>
                  <input value="Vol:1" aria-label="Volume" />
                  <button>+</button>
                  <button>x2</button>
                </div>
                <div class="row sums"><span>SELLx0 +0.0%</span><span>BUYx0 +0.0%</span></div>
                <div class="row close">
                  <button class="s">S</button>
                  <button class="c">50%</button>
                  <button class="all">CLOSE</button>
                  <button class="c">30%</button>
                  <button class="b">B</button>
                </div>
              </template>
              <div class="row result"><span>0JPY</span><span>0.00%</span></div>
            </div>
            <div class="keys">
              <button class="grey">Fn</button>
              <button class="grey run">&gt;</button>
              <span class="spin"><button>+</button><button>-</button></span>
              <span class="pair"><button>&lt;&lt;</button><button>&gt;&gt;</button></span>
              <span class="pair"><button>1&lt;</button><button>&gt;1</button></span>
            </div>
          </div>
        </div>
      </section>
    </main>

    <div class="shelf">
      <div v-for="n in ['E...', 'U...']" :key="n" class="mini">
        <svg class="win-icon" width="18" height="18" viewBox="0 0 18 18" v-html="chartGlyph"></svg>
        <span>{{ n }}</span>
        <button class="wbtn" aria-label="Restore"><svg width="22" height="22" viewBox="0 0 22 22" v-html="winGlyph.restore"></svg></button>
        <button class="wbtn" aria-label="Maximize"><svg width="22" height="22" viewBox="0 0 22 22" v-html="winGlyph.max"></svg></button>
        <button class="wbtn" aria-label="Close"><svg width="22" height="22" viewBox="0 0 22 22" v-html="winGlyph.close"></svg></button>
      </div>
    </div>

    <div class="tabs" role="tablist">
      <button v-for="(t, i) in tabs" :key="t" role="tab" :class="{ on: i === 0 }">{{ t }}</button>
      <span class="nudge">
        <svg width="28" height="10" viewBox="0 0 28 10"><path d="M5 0v10L0 5zM24 0v10l5-5z" fill="#aaa" /></svg>
      </span>
    </div>
  </div>
</template>

<style>
body {
  margin: 0;
  overflow: hidden;
}
</style>

<style scoped>
.app {
  display: flex;
  flex-direction: column;
  height: 100vh;
  overflow: hidden;
  background: #f0f0ee;
  color: #000;
  font-family: "DejaVu Sans Condensed", "DejaVu Sans", "Noto Sans CJK JP", sans-serif;
  font-size: 12px;
}
button,
input {
  margin: 0;
  padding: 0;
  border: 0;
  border-radius: 0;
  background: none;
  color: inherit;
  font: inherit;
}
svg {
  display: block;
  flex: none;
}

.menu {
  display: flex;
  flex: none;
  gap: 26px;
  height: 23px;
  padding-left: 4px;
  border-bottom: 1px solid #a0a0a0;
  font-family: "DejaVu Sans", "Noto Sans CJK JP", sans-serif;
  font-size: 15px;
}
.menu-item {
  height: 18px;
  line-height: 18px;
  white-space: nowrap;
}

.toolbar {
  display: flex;
  flex: none;
  align-items: center;
  height: 32px;
  padding-left: 1px;
  border-top: 1px solid #fff;
  border-bottom: 2px solid #4a4f50;
}
.tool {
  display: flex;
  flex: none;
  align-items: center;
  justify-content: center;
  width: 34px;
  height: 32px;
}
.tool.wide {
  width: auto;
  padding: 0 6px;
  gap: 3px;
  font-size: 15px;
  white-space: nowrap;
}
.tool.wide span {
  padding-bottom: 4px;
}
.tool.pressed {
  height: 30px;
  width: 32px;
  margin-right: 1px;
  border: 1px solid #fff;
  border-top-color: #999;
  border-left-color: #999;
  background: #f8f8f7;
}
.drop {
  flex: none;
  width: 17px;
  height: 32px;
  padding-left: 3px;
}
.sep {
  flex: none;
  width: 1px;
  height: 28px;
  margin: 0 3px;
  background: #999;
}
.grip {
  flex: none;
  width: 3px;
  height: 28px;
  background: repeating-linear-gradient(#999 0 1px, transparent 1px 3px);
}
.tool-end {
  display: flex;
  gap: 15px;
  align-items: center;
  margin-left: auto;
}
.chat {
  position: relative;
  width: 28px;
  height: 30px;
  padding-top: 4px;
}
.badge {
  position: absolute;
  top: 1px;
  right: 0;
  width: 21px;
  height: 21px;
  border-radius: 50%;
  background: linear-gradient(#f4523a 50%, #b32c26 50%);
  color: #fff;
  font-size: 15px;
  line-height: 21px;
  text-align: center;
}

.desktop {
  display: grid;
  flex: 1;
  grid-template-columns: 671fr 667fr;
  align-content: start;
  background: #6c7478;
}
.window {
  box-sizing: border-box;
  min-width: 0;
  padding: 0 2px 7px 9px;
  border: 1px solid #39444b;
  border-right: 0;
  border-radius: 6px 0 0 0;
  background: linear-gradient(#fff 0 1px, #c1cfdd 1px, #c3d2e1 19px, #cbdae9 20px, #cbdae9 26px, #d7e4f2 28px);
}
.window:nth-child(odd) {
  padding: 0 8px 7px 7px;
  border-right: 1px solid #39444b;
  border-left: 0;
  border-radius: 0 6px 0 0;
}
.window.active {
  background: linear-gradient(#fff 0 1px, #9ab4d0 1px, #a0bad8 19px, #adc6e2 20px, #adc6e2 26px, #b9d1ea 28px);
  box-shadow: inset -1px -1px #35c5d8;
}
.titlebar {
  display: flex;
  box-sizing: border-box;
  align-items: center;
  height: 37px;
  padding: 6px 2px 0;
  gap: 2px;
}
.titlebar h2 {
  flex: 1;
  margin: 0 0 0 3px;
  color: #8f979f;
  font-size: 16px;
  font-weight: 400;
  line-height: 31px;
}
.titlebar.titlebar,
.active h2 {
  color: #10151c;
}
.wbtn {
  display: flex;
  flex: none;
  box-sizing: border-box;
  align-items: center;
  justify-content: center;
  width: 42px;
  height: 24px;
  border: 1px solid #7f93ab;
  border-radius: 2px;
  box-shadow: inset 0 0 0 1px #dbe6f1;
  background: linear-gradient(#c6d5e4 50%, #bccddf 50%);
}
.active .wbtn {
  border-color: #66788f;
  box-shadow: inset 0 0 0 1px #bdd0e4;
  background: linear-gradient(#b0c8e0 42%, #8badcd 42%, #9dbbd8);
}
.active .shut {
  border-color: #4a1c1c;
  box-shadow: none;
  background: linear-gradient(#f2b283 0 25%, #d3805c 26% 42%, #a82a20 43% 75%, #d45a38 76%);
}
.client {
  position: relative;
  overflow: hidden;
  border: 2px solid #6e6e6e;
  border-right-color: #f0f0f0;
  border-bottom-color: #f0f0f0;
  background: #000;
}
.plot {
  font-size: 12px;
}
.t {
  white-space: pre;
}
.t:not([fill]) {
  fill: #fff;
}
.frame {
  fill: none;
  stroke: #fff;
}
.grid {
  stroke: #50545a;
  stroke-dasharray: 6 2;
}
.now {
  stroke: #8a8f96;
  stroke-dasharray: 4 3;
}
.day {
  stroke: #fff;
  stroke-dasharray: 3 2;
}
.curve {
  fill: none;
  stroke-width: 1;
}

.overlay {
  position: absolute;
  top: 2px;
  left: 2px;
  width: 180px;
  color: #000080;
}
.panel {
  box-sizing: border-box;
  padding: 1px 2px;
  border: 1px solid #fff;
  outline: 1px solid #bbb;
  outline-offset: -2px;
  background: #f0f0f0;
}
.panel-head {
  display: flex;
  position: relative;
  align-items: center;
  height: 23px;
  padding: 0 4px 0 3px;
  color: #333;
  font-size: 16px;
}
.panel-head::before {
  position: absolute;
  top: 4px;
  left: 1px;
  border: solid transparent;
  border-width: 5px 5px 0;
  border-top-color: #fff;
  content: "";
}
.dash {
  width: 9px;
  height: 2px;
  margin: 8px 0 0 6px;
  background: #aaa;
}
.px {
  margin-left: auto;
}
.row {
  display: flex;
  margin: 0 1px;
}
.row > * {
  box-sizing: border-box;
  flex: 1;
  text-align: center;
  white-space: nowrap;
}
.big button {
  height: 33px;
  color: #fff;
  font-family: "Open Sans", "Noto Sans", sans-serif;
  font-size: 22px;
  line-height: 28px;
}
.big .sell {
  line-height: 30px;
}
.sell,
.row .s {
  border: solid #7a1512;
  border-width: 0 2px 2px 0;
  background: #aa2e28;
}
.buy {
  border: 2px solid #6aa0f0;
  border-right-color: #235a9f;
  border-bottom-color: #235a9f;
  background: #407ccc;
}
.row.quote {
  height: 16px;
  background: #fff;
  line-height: 16px;
}
.row.vol {
  height: 18px;
  background: #fff;
}
.vol button {
  flex: 27;
  margin: 0 1px;
  background: #f8f8d0;
  border: solid #e3eab8;
  border-width: 0 1px 1px 0;
}
.vol button:nth-of-type(2),
.vol button:nth-of-type(3) {
  flex: 20;
}
.vol input {
  flex: 72;
  width: 0;
  border: 1px solid #bbb;
  background: #fff;
}
.row.sums {
  height: 17px;
  border-top: 1px solid #bbb;
  background: #e8f8ff;
  line-height: 17px;
}
.sums span + span {
  border-left: 1px solid #bbb;
}
.row.close {
  height: 18px;
  color: #dfeaff;
  font-size: 11px;
}
.row.close button {
  flex: 54;
  border-style: solid;
  border-width: 1px 2px 2px 1px;
}
.row.close .c,
.row.close .all,
.row.close .b {
  border-color: #5c96ea #235a9f #235a9f #5c96ea;
  background: #407ccc;
}
.row.close .c {
  flex: 35;
}
.row.close .s {
  flex: 20;
}
.row.close .b {
  flex: 22;
}
.row.result {
  height: 17px;
  border: 1px solid #bbb;
  background: #fff;
  line-height: 17px;
}
.result span + span {
  border-left: 1px solid #bbb;
}
.keys {
  display: flex;
  height: 20px;
  margin-top: 7px;
  padding-left: 4px;
}
.keys button {
  box-sizing: border-box;
  width: 24px;
  height: 20px;
  border: 1px solid #fff;
  border-right-color: #dfe8b8;
  border-bottom-color: #dfe8b8;
  background: #f8f8d0;
  line-height: 18px;
}
.keys .grey {
  width: 25px;
  margin-right: 2px;
  border: 1px solid #e8e8e8;
  border-right-color: #aaa;
  border-bottom-color: #aaa;
  background: #d2d2d2;
  font-size: 15px;
}
.keys .run {
  width: 28px;
  margin-right: 0;
  font-size: 12px;
}
.spin {
  display: flex;
  flex-direction: column;
  width: 16px;
}
.keys .spin button {
  width: 16px;
  height: 10px;
  color: #8a8a70;
  font-size: 8px;
  line-height: 7px;
}
.pair {
  display: flex;
  margin-left: 4px;
}

.shelf {
  display: flex;
  flex: none;
  gap: 1px;
  height: 36px;
  padding-bottom: 1px;
  background: #aaaaa8;
}
.mini {
  display: flex;
  box-sizing: border-box;
  align-items: center;
  gap: 2px;
  width: 198px;
  height: 34px;
  margin-top: 1px;
  padding: 0 4px;
  border: 1px solid #39444b;
  border-radius: 5px 5px 0 0;
  background: linear-gradient(#c1cfdd, #c8d7e6 18px, #d7e4f2 22px);
}
.mini:first-child {
  width: 196px;
  padding-left: 3px;
  border-left: 0;
}
.mini span {
  flex: 1;
  margin-left: 3px;
  color: #98a0a8;
  font-size: 15px;
}

.tabs {
  display: flex;
  flex: none;
  box-sizing: border-box;
  align-items: flex-start;
  height: 18px;
  padding-left: 2px;
  border-top: 1px solid #000;
  background: #f0f0ee;
  color: #6e6e6e;
  font-size: 16px;
}
.tabs button {
  height: 24px;
  padding: 0 15px;
  border-right: 1px solid #777;
  line-height: 24px;
}
.tabs .on {
  padding: 0 13px;
  border-left: 1px solid #000;
  border-right: 1px solid #000;
  background: #fff;
  color: #000;
}
.nudge {
  margin-left: auto;
  padding: 6px 3px 0 0;
}
</style>
